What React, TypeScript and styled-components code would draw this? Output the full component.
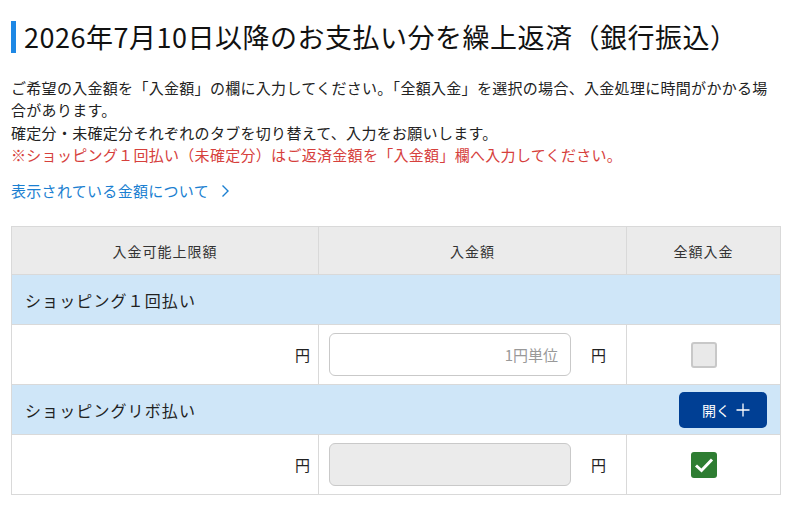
import React from "react";
import styled, { createGlobalStyle } from "styled-components";

const Global = createGlobalStyle`
  html, body { margin: 0; padding: 0; background: #fff; }
  body { font-family: "Noto Sans CJK JP", "Noto Sans", sans-serif; color: #222; }
`;

const Page = styled.div`
  padding: 21px 11px 0 11px;
  width: 770px;
`;

const Title = styled.h1`
  margin: 0;
  display: flex;
  align-items: center;
  gap: 8px;
  height: 32px;
  font-size: 27px;
  letter-spacing: 0.5px;
  font-weight: 400;
  line-height: 32px;
  color: #111;
  white-space: nowrap;
  &::before {
    content: "";
    display: block;
    flex: none;
    width: 5px;
    height: 32px;
    background: #1e88e5;
  }
`;

const Notes = styled.div`
  margin-top: 24px;
  width: 762px;
  font-size: 15px;
  line-height: 22.3px;
  letter-spacing: 0.3px;
`;

const Note = styled.p<{ $red?: boolean }>`
  margin: 0;
  color: ${(p) => (p.$red ? "#d6403c" : "#222")};
`;

const InfoLink = styled.a`
  display: inline-flex;
  align-items: center;
  gap: 12px;
  margin-top: 14px;
  font-size: 15px;
  line-height: 22px;
  letter-spacing: 0.3px;
  color: #1b7fd1;
  text-decoration: none;
  svg { display: block; }
`;

const Table = styled.div`
  margin-top: 24px;
  border: 1px solid #d9d9d9;
  display: flex;
  flex-direction: column;
`;

const Row = styled.div`
  display: grid;
  grid-template-columns: 307px 308px 1fr;
`;

const HeadCell = styled.div<{ $last?: boolean }>`
  height: 47px;
  background: #ebebeb;
  display: flex;
  align-items: center;
  justify-content: center;
  font-size: 14px;
  letter-spacing: 1px;
  color: #333;
  border-right: ${(p) => (p.$last ? "none" : "1px solid #d9d9d9")};
`;

const Section = styled.div`
  height: 49px;
  background: #cfe6f8;
  display: flex;
  align-items: center;
  justify-content: space-between;
  padding: 0 13px 0 13px;
  font-size: 16px;
  letter-spacing: 1.1px;
  color: #222;
  border-top: 1px solid #d9d9d9;
`;

const Cell = styled.div<{ $last?: boolean; $align?: string }>`
  height: 59px;
  display: flex;
  align-items: center;
  justify-content: ${(p) => p.$align || "flex-start"};
  border-top: 1px solid #d9d9d9;
  border-right: ${(p) => (p.$last ? "none" : "1px solid #d9d9d9")};
  font-size: 14px;
`;

const Yen = styled.span`
  font-size: 15px;
  color: #222;
`;

const LimitCell = styled(Cell)`
  justify-content: flex-end;
  padding-right: 8px;
`;

const AmountCell = styled(Cell)`
  padding-left: 10px;
  gap: 20px;
`;

const AmountInput = styled.div<{ $disabled?: boolean }>`
  width: 242px;
  height: 43px;
  box-sizing: border-box;
  border: 1px solid #c9c9c9;
  border-radius: 6px;
  background: ${(p) => (p.$disabled ? "#ebebeb" : "#fff")};
  display: flex;
  align-items: center;
  justify-content: flex-end;
  padding-right: 12px;
  font-size: 15px;
  color: #999;
`;

const Check = styled.div<{ $checked?: boolean }>`
  width: 26px;
  height: 26px;
  box-sizing: border-box;
  border-radius: 3px;
  border: ${(p) => (p.$checked ? "none" : "2px solid #c8c8c8")};
  background: ${(p) => (p.$checked ? "#2e7d32" : "#e9e9e9")};
  display: flex;
  align-items: center;
  justify-content: center;
  svg { display: block; }
`;

const OpenButton = styled.button`
  width: 88px;
  height: 36px;
  border: none;
  border-radius: 5px;
  background: #003f94;
  color: #fff;
  font-family: inherit;
  font-size: 14px;
  display: flex;
  align-items: center;
  justify-content: center;
  gap: 6px;
  padding: 0 0 0 6px;
  svg { display: block; }
`;

const Chevron = () => (
  <svg width="9" height="14" viewBox="0 0 9 14" fill="none">
    <path d="M1.5 1.5 L7 7 L1.5 12.5" stroke="#1b7fd1" strokeWidth="1.4" />
  </svg>
);

const Plus = () => (
  <svg width="14" height="14" viewBox="0 0 14 14">
    <path d="M7 0.5 V13.5 M0.5 7 H13.5" stroke="#fff" strokeWidth="1.3" />
  </svg>
);

const Tick = () => (
  <svg width="20" height="16" viewBox="0 0 20 16" fill="none">
    <path d="M2 8.5 L7.5 13.5 L18 2.5" stroke="#fff" strokeWidth="3" />
  </svg>
);

export default function App() {
  return (
    <>
      <Global />
      <Page>
        <Title>2026年7月10日以降のお支払い分を繰上返済（銀行振込）</Title>
        <Notes>
          <Note>
            ご希望の入金額を「入金額」の欄に入力してください。「全額入金」を選択の場合、入金処理に時間がかかる場合があります。
          </Note>
          <Note>確定分・未確定分それぞれのタブを切り替えて、入力をお願いします。</Note>
          <Note $red>
            ※ショッピング１回払い（未確定分）はご返済金額を「入金額」欄へ入力してください。
          </Note>
        </Notes>
        <InfoLink href="#">
          表示されている金額について
          <Chevron />
        </InfoLink>
        <Table>
          <Row>
            <HeadCell>入金可能上限額</HeadCell>
            <HeadCell>入金額</HeadCell>
            <HeadCell $last>全額入金</HeadCell>
          </Row>
          <Section>ショッピング１回払い</Section>
          <Row>
            <LimitCell>
              <Yen>円</Yen>
            </LimitCell>
            <AmountCell>
              <AmountInput>1円単位</AmountInput>
              <Yen>円</Yen>
            </AmountCell>
            <Cell $last $align="center">
              <Check />
            </Cell>
          </Row>
          <Section>
            ショッピングリボ払い
            <OpenButton>
              開く
              <Plus />
            </OpenButton>
          </Section>
          <Row>
            <LimitCell>
              <Yen>円</Yen>
            </LimitCell>
            <AmountCell>
              <AmountInput $disabled />
              <Yen>円</Yen>
            </AmountCell>
            <Cell $last $align="center">
              <Check $checked>
                <Tick />
              </Check>
            </Cell>
          </Row>
        </Table>
      </Page>
    </>
  );
}
